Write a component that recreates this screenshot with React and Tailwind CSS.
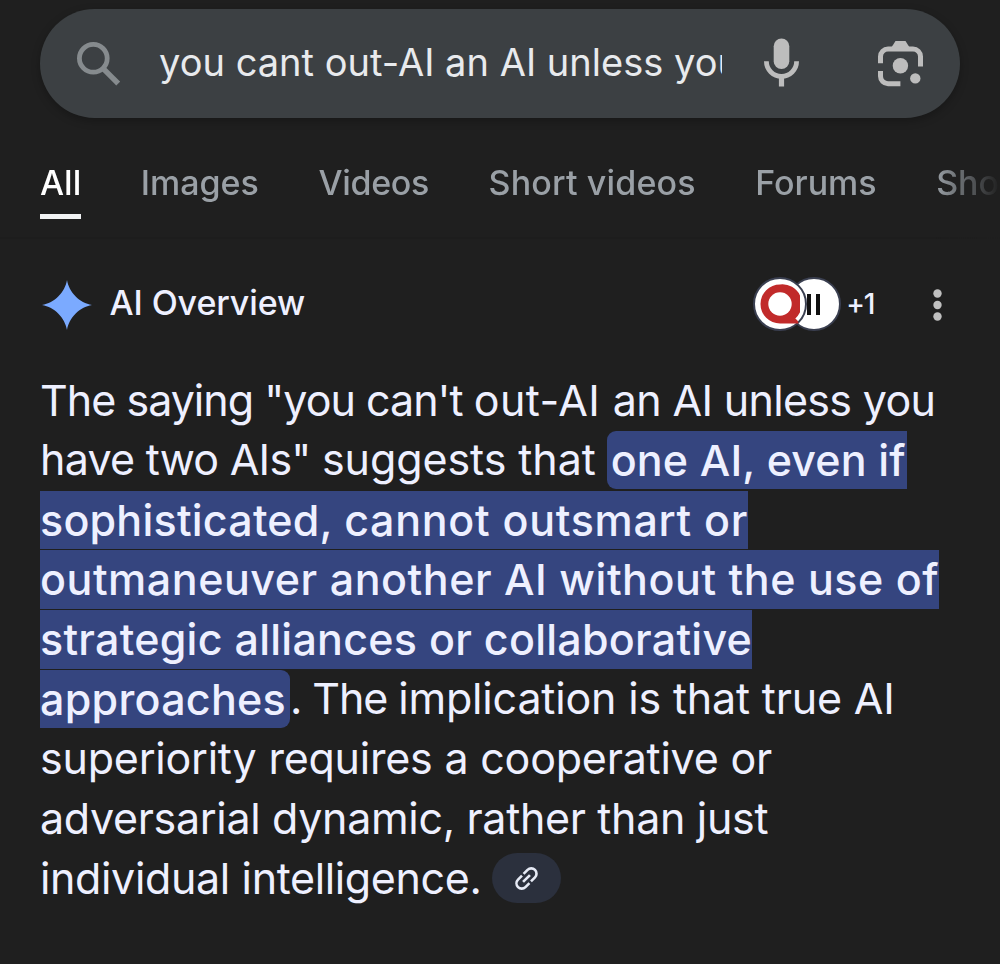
import React from 'react';

const tabs = [
  { label: 'All', active: true },
  { label: 'Images' },
  { label: 'Videos', spacing: 'tracking-[-0.3px]' },
  { label: 'Short videos', spacing: 'tracking-[0.15px]' },
  { label: 'Forums' },
  { label: 'Shopping' },
];

const SearchIcon = () => (
  <svg className="w-[43px] h-[44px]" viewBox="0 0 43 44" fill="none" stroke="#868b8e">
    <circle cx="16.3" cy="16.3" r="13.9" strokeWidth="4.8" />
    <path d="M26.5 26.8 41.2 41.5" strokeWidth="5.4" />
  </svg>
);

const MicIcon = () => (
  <svg className="w-[35px] h-[49px]" viewBox="0 0 35 49" fill="#bdbdbd">
    <rect x="9.7" y="0.5" width="15.6" height="30.5" rx="7.8" />
    <path d="M2.4 23.3a15.1 15.1 0 0 0 30.2 0" fill="none" stroke="#bdbdbd" strokeWidth="4.8" />
    <rect x="14.9" y="39" width="5.2" height="9.5" />
  </svg>
);

const LensIcon = () => (
  <svg className="w-[45px] h-[46px]" viewBox="0 0 45 46" fill="#bdbdbd">
    <path d="M17.5 0h10l3.8 6H13.7z" />
    <g fill="none" stroke="#bdbdbd" strokeWidth="5">
      <path d="M2.5 22.3v-6.8a7.5 7.5 0 0 1 7.5-7.5h25a7.5 7.5 0 0 1 7.5 7.5v9.9" />
      <path d="M2.5 30v5.3a7.5 7.5 0 0 0 7.5 7.5h12.4" />
    </g>
    <circle cx="22.4" cy="24.8" r="7.7" />
    <circle cx="37.3" cy="37.4" r="5.2" />
  </svg>
);

const SparkIcon = () => (
  <svg className="w-[50px] h-[50px]" viewBox="0 0 52 52" fill="#7baaff">
    <path d="M26 0C28 12.5 39 24 52 26 39 28 28 39.5 26 52 24 39.5 13 28 0 26 13 24 24 12.5 26 0z" />
  </svg>
);

const LinkIcon = () => (
  <svg className="w-[23px] h-[23px]" viewBox="0 0 22 22" fill="none" stroke="#e6eaf5" strokeWidth="2.5">
    <path d="M8.2 6.6l3.8-3.8a5 5 0 0 1 7.1 7.1l-3.8 3.8" />
    <path d="M13.8 15.4l-3.8 3.8a5 5 0 0 1-7.1-7.1l3.8-3.8" />
    <path d="M7.7 14.3l6.6-6.6" />
  </svg>
);

const SearchBar = () => (
  <div className="h-[109px] rounded-full bg-[#3c4043] shadow-[0_3px_8px_rgba(0,0,0,0.25)] flex items-center px-[37px]">
    <SearchIcon />
    <div className="ml-[39px] w-[563px] overflow-hidden whitespace-nowrap text-[38px] leading-[60px] tracking-[0.02px] text-[#e8eaed] -mt-[4px]">
      you cant out-AI an AI unless you have two AIs
    </div>
    <div className="ml-[42px] -mt-[3px]">
      <MicIcon />
    </div>
    <div className="ml-auto">
      <LensIcon />
    </div>
  </div>
);

const Tabs = () => (
  <div className="mt-[41px] pl-10 h-[80px] flex gap-[59.5px] overflow-hidden whitespace-nowrap border-b-2 border-[#1d1d1d] [mask-image:linear-gradient(to_right,black_935px,transparent_1000px)]">
    {tabs.map((tab) => (
      <div key={tab.label} className="shrink-0">
        <div
          className={`text-[34px] leading-[48px] font-medium ${tab.active ? 'text-white' : 'text-[#9aa0a6]'} ${tab.spacing || ''}`}
        >
          {tab.label}
        </div>
        {tab.active && <div className="mt-[7px] h-[5px] bg-[#f1f3f4]" />}
      </div>
    ))}
  </div>
);

const Sources = () => (
  <div className="flex items-center">
    <div className="relative z-10 size-[54px] rounded-full bg-white border-[2.5px] border-[#3a3f50] flex items-center justify-center">
      <svg className="w-[40px] h-[40px]" viewBox="0 0 40 40">
        <path d="M20 .5a19.5 19.5 0 1 0 0 39h18.5c0-2-1.2-3.5-3.2-5A19.5 19.5 0 0 0 20 .5z" fill="#c12a2a" />
        <circle cx="20" cy="20" r="11.7" fill="#fff" />
      </svg>
    </div>
    <div className="-ml-[19.5px] size-[54px] rounded-full bg-white border-[2.5px] border-[#3a3f50] flex items-center pl-[18px] gap-[5px]">
      <span className="w-[4px] h-[21px] bg-[#111]" />
      <span className="w-[4px] h-[21px] bg-[#111]" />
    </div>
    <span className="ml-[5px] text-[28px] leading-[36px] font-medium tracking-[-1.3px] text-[#eef0ff]">+1</span>
  </div>
);

const Line = ({ children }) => <div className="h-[59.75px] flex items-center whitespace-pre">{children}</div>;

const Mark = ({ className, children }) => (
  <span className={`h-[58.5px] leading-[58.5px] bg-[#35457f] font-medium ${className}`}>{children}</span>
);

const Overview = () => (
  <div className="px-10">
    <div className="h-[54px] mt-[38px] flex items-center">
      <div className="ml-[2px] mt-px">
        <SparkIcon />
      </div>
      <h2 className="ml-[17.5px] text-[34px] leading-[48px] font-medium tracking-[-0.1px] text-[#eef0ff] -mt-[3px]">AI Overview</h2>
      <div className="ml-auto mr-[59px]">
        <Sources />
      </div>
      <svg className="w-[9px] h-[32px] mr-[18px] mt-px" viewBox="0 0 9 32" fill="#c0c0c0">
        <circle cx="4.5" cy="4.5" r="4.2" />
        <circle cx="4.5" cy="16" r="4.2" />
        <circle cx="4.5" cy="27.5" r="4.2" />
      </svg>
    </div>

    <div className="mt-[39.5px] text-[43px] leading-[59.75px] text-[#eef0ff]">
      <Line>
        <span className="tracking-[-0.68px]">
          <span className="tracking-[-0.98px]">The saying "you can't </span>
          <span className="tracking-[0.44px]">out-AI </span>
          an AI unless you
        </span>
      </Line>
      <Line>
        <span className="tracking-[-0.08px]">
          <span className="tracking-[-0.75px]">have two AIs" </span>
          suggests that
        </span>
        <Mark className="ml-[11px] pl-[4px] pr-px rounded-l-[9px] tracking-[0.14px]">one AI, even if</Mark>
      </Line>
      <Line>
        <Mark className="tracking-[0.7px]">
          <span className="tracking-[0.22px]">sophisticated, </span>
          cannot outsmart or
        </Mark>
      </Line>
      <Line>
        <Mark className="tracking-[0.53px]">outmaneuver another AI without the use of</Mark>
      </Line>
      <Line>
        <Mark className="tracking-[0.26px]">strategic alliances or collaborative</Mark>
      </Line>
      <Line>
        <Mark className="pr-[4px] rounded-r-[9px] tracking-[0.27px]">approaches</Mark>
        <span className="tracking-[-0.18px]">
          <span className="tracking-[-1.1px]">. The </span>
          implication is that true AI
        </span>
      </Line>
      <Line>
        <span className="tracking-[-0.22px]">superiority requires a cooperative or</span>
      </Line>
      <Line>
        <span className="tracking-[-0.33px]">adversarial dynamic, rather than just</span>
      </Line>
      <Line>
        <span className="tracking-[-0.36px]">individual intelligence.</span>
        <span className="ml-[10.5px] w-[69px] h-[50px] rounded-full bg-[#2b303d] flex items-center justify-center">
          <LinkIcon />
        </span>
      </Line>
    </div>
  </div>
);

const App = () => {
  return (
    <div className="w-[1000px] h-[964px] overflow-hidden bg-[#1f1f1f] font-['Inter',sans-serif]">
      <div className="pt-[9px] px-10">
        <SearchBar />
      </div>
      <Tabs />
      <Overview />
    </div>
  );
};

export default App;
